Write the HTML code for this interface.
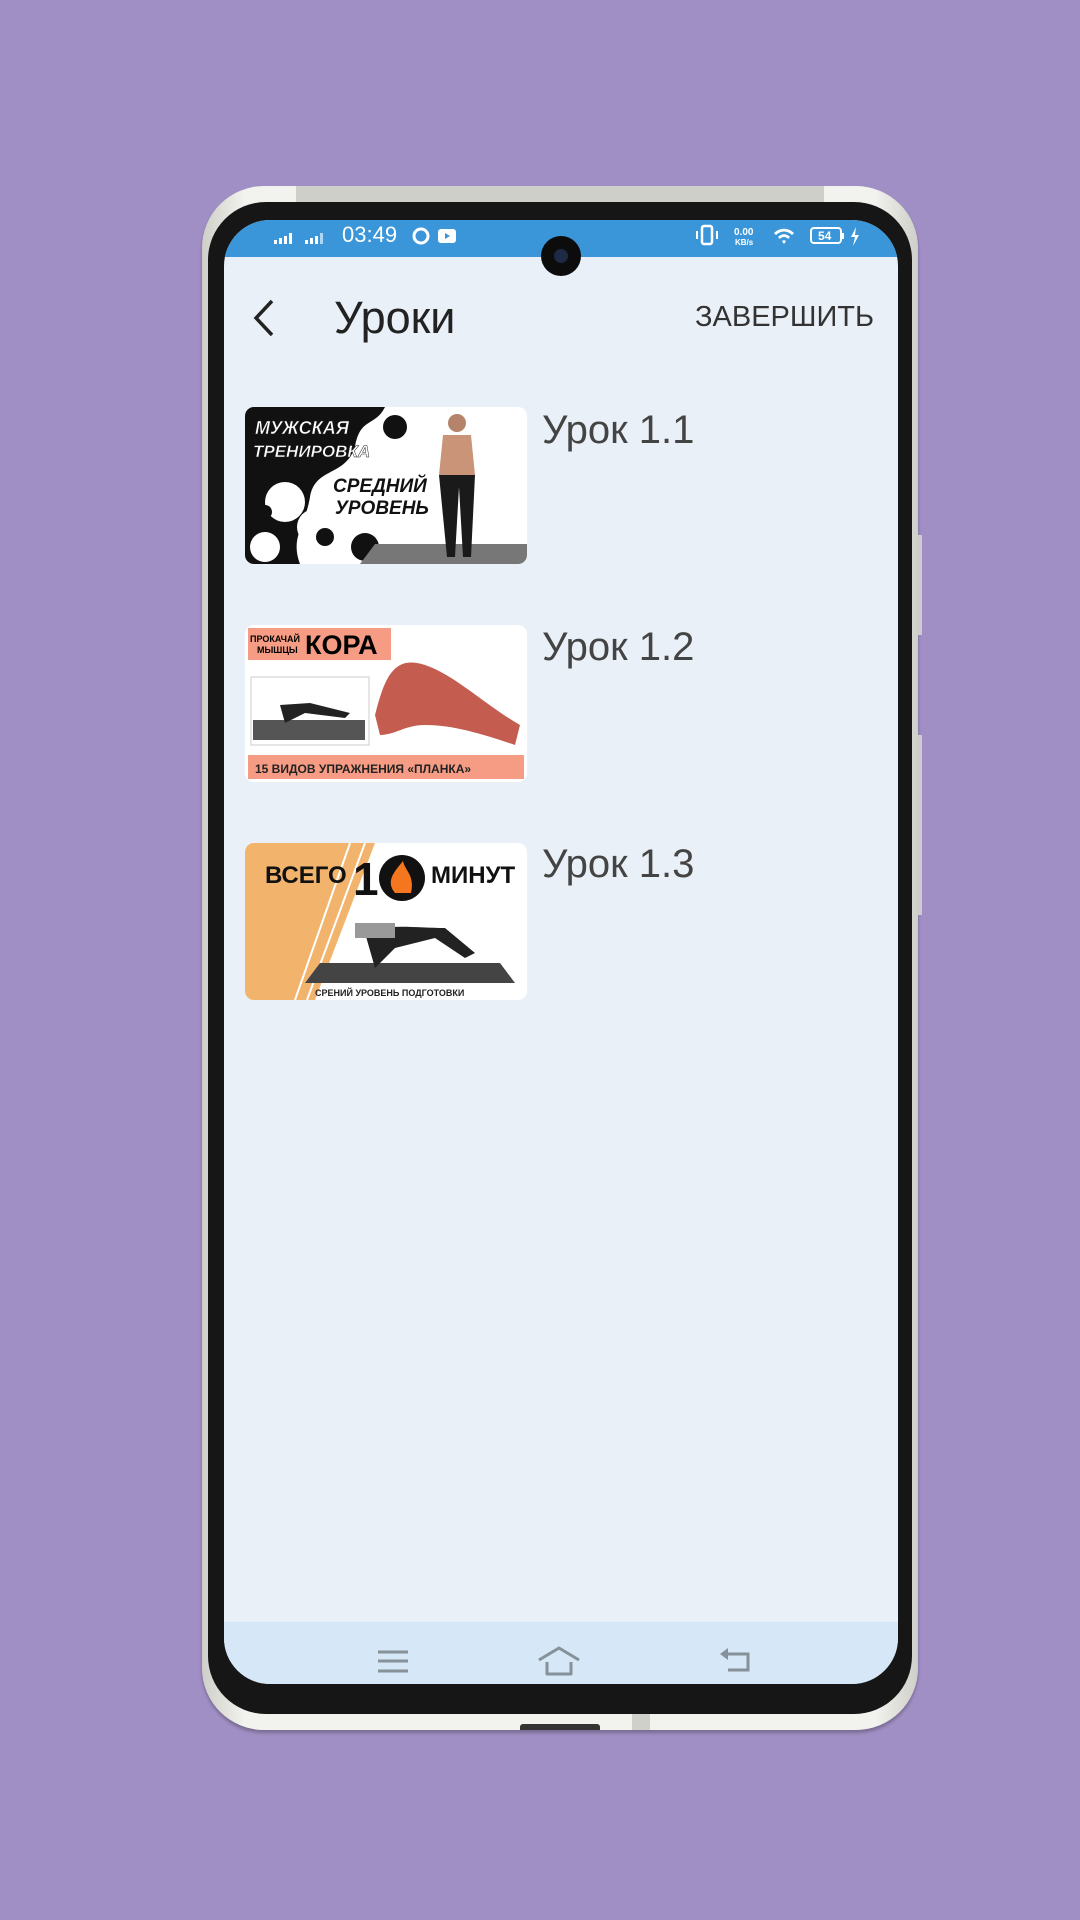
<!DOCTYPE html>
<html><head><meta charset="utf-8"><style>
*{margin:0;padding:0;box-sizing:border-box}
body{width:1080px;height:1920px;background:#a08fc4;position:relative;overflow:hidden;font-family:"Liberation Sans","DejaVu Sans",sans-serif}
.abs{position:absolute}
#outer{left:202px;top:186px;width:716px;height:1544px;border-radius:62px;background:linear-gradient(90deg,#cfcfc9,#f2f2ee 6%,#f2f2ee 94%,#cfcfc9);box-shadow:0 3px 3px rgba(0,0,0,.25)}
#bezel{left:208px;top:202px;width:704px;height:1512px;border-radius:58px;background:#161616}
#screen{left:224px;top:220px;width:674px;height:1464px;border-radius:46px;background:#e9f0f7;overflow:hidden}
#status{left:0;top:0;width:674px;height:37px;background:#3a96d9;color:#fff}
#nav{left:0;top:1402px;width:674px;height:62px;background:#d6e8f7}
.title{font-size:40px;color:#444}
.th{width:282px;height:157px;border-radius:9px;overflow:hidden;background:#fff}
</style></head><body>
<div id="outer" class="abs"></div>
<div class="abs" style="left:296px;top:186px;width:528px;height:16px;background:#cfcfc9"></div>
<div class="abs" style="left:375px;top:203px;width:370px;height:8px;border-radius:0 0 8px 8px;background:#555"></div>
<div id="bezel" class="abs"></div>
<div class="abs" style="left:918px;top:535px;width:4px;height:100px;background:#ccc"></div>
<div class="abs" style="left:918px;top:735px;width:4px;height:180px;background:#ccc"></div>
<div class="abs" style="left:520px;top:1724px;width:80px;height:6px;background:#333;border-radius:3px 3px 0 0"></div>
<div class="abs" style="left:632px;top:1714px;width:18px;height:16px;background:#d0d0cb"></div>
<div id="screen" class="abs">
 <div id="status" class="abs">
  <svg class="abs" style="left:50px;top:10px" width="60" height="16"><g fill="#fff"><rect x="0" y="10" width="3" height="4"/><rect x="5" y="8" width="3" height="6"/><rect x="10" y="6" width="3" height="8"/><rect x="15" y="3" width="3" height="11"/><rect x="31" y="10" width="3" height="4"/><rect x="36" y="8" width="3" height="6"/><rect x="41" y="6" width="3" height="8"/><rect x="46" y="3" width="3" height="11" opacity=".6"/></g></svg>
  <div class="abs" style="left:118px;top:2px;font-size:22px;color:#fff">03:49</div>
  <svg class="abs" style="left:188px;top:7px" width="48" height="20"><circle cx="9" cy="9" r="7" fill="none" stroke="#fff" stroke-width="3"/><rect x="26" y="2" width="18" height="14" rx="3" fill="#fff"/><path d="M33 6l5 3-5 3z" fill="#3a96d9"/></svg>
  <svg class="abs" style="left:470px;top:4px" width="180" height="28"><g fill="#fff"><rect x="8" y="2" width="10" height="18" rx="2" fill="none" stroke="#fff" stroke-width="2.5"/><rect x="2" y="7" width="2" height="8"/><rect x="22" y="7" width="2" height="8"/><text x="40" y="11" font-size="10" font-weight="bold" font-family="Liberation Sans">0.00</text><text x="41" y="21" font-size="8" font-weight="bold" font-family="Liberation Sans">KB/s</text><path d="M80 9a14 14 0 0 1 20 0l-2 2a11 11 0 0 0-16 0z M84 13a8 8 0 0 1 12 0l-2 2a5 5 0 0 0-8 0z M88 17a3 3 0 0 1 4 0l-2 3z"/><rect x="117" y="4" width="30" height="15" rx="3" fill="none" stroke="#fff" stroke-width="2"/><rect x="148" y="9" width="2" height="6"/><text x="124" y="16" font-size="12" font-weight="bold" font-family="Liberation Sans">54</text><path d="M162 3l-5 10h4l-2 9 6-11h-4z"/></g></svg>
 </div>
 <div class="abs" style="left:317px;top:16px;width:40px;height:40px;border-radius:50%;background:#0c0c0c"><div style="margin:13px;width:14px;height:14px;border-radius:50%;background:#1e2a44"></div></div>
 <svg class="abs" style="left:26px;top:78px" width="30" height="40"><path d="M22 3L6 20l16 17" fill="none" stroke="#222" stroke-width="3.5"/></svg>
 <div class="abs" style="left:110px;top:72px;font-size:45px;color:#222">Уроки</div>
 <div class="abs" style="left:471px;top:81px;font-size:29px;color:#333">ЗАВЕРШИТЬ</div>

 <div class="abs th" style="left:21px;top:187px">
  <svg width="282" height="157" viewBox="0 0 282 157">
   <path d="M0 0h140c-10 20-25 10-30 40-10 30-40 20-45 50-5 30-20 40-10 67H0z" fill="#111"/>
   <g fill="#fff"><circle cx="40" cy="95" r="20"/><circle cx="70" cy="120" r="18"/><circle cx="20" cy="140" r="15"/><circle cx="95" cy="80" r="12"/></g>
   <g fill="#111"><circle cx="150" cy="20" r="12"/><circle cx="80" cy="130" r="9"/><circle cx="120" cy="140" r="14"/><circle cx="20" cy="105" r="7"/></g>
   <path d="M115 157l15-20h152v20z" fill="#777"/>
   <text x="10" y="27" font-size="18" font-weight="bold" font-style="italic" fill="#fff" stroke="#222" stroke-width=".5" font-family="Liberation Sans">МУЖСКАЯ</text>
   <text x="8" y="50" font-size="17" font-weight="bold" font-style="italic" fill="#fff" stroke="#222" stroke-width=".5" font-family="Liberation Sans">ТРЕНИРОВКА</text>
   <text x="88" y="85" font-size="19" font-weight="bold" font-style="italic" fill="#111" font-family="Liberation Sans">СРЕДНИЙ</text>
   <text x="90" y="107" font-size="19" font-weight="bold" font-style="italic" fill="#111" font-family="Liberation Sans">УРОВЕНЬ</text>
   <circle cx="212" cy="16" r="9" fill="#b5836a"/>
   <path d="M198 28h28l4 40h-36z" fill="#c99478"/>
   <path d="M194 68h36l-4 82h-8l-4-70-4 70h-8z" fill="#1a1a1a"/>
  </svg>
 </div>
 <div class="abs title" style="left:318px;top:188px">Урок 1.1</div>

 <div class="abs th" style="left:21px;top:405px">
  <svg width="282" height="157" viewBox="0 0 282 157">
   <rect x="3" y="3" width="143" height="32" fill="#f79c84"/>
   <text x="5" y="17" font-size="9" font-weight="bold" font-family="Liberation Sans">ПРОКАЧАЙ</text>
   <text x="12" y="28" font-size="9" font-weight="bold" font-family="Liberation Sans">МЫШЦЫ</text>
   <text x="60" y="29" font-size="27" font-weight="bold" font-family="Liberation Sans">КОРА</text>
   <rect x="6" y="52" width="118" height="68" fill="#fff" stroke="#ccc"/>
   <path d="M8 95h112v20H8z" fill="#555"/>
   <path d="M35 80l30 -2 40 10-5 5-40-5-20 10z" fill="#222"/>
   <path d="M130 90c10-40 20-60 50-50 30 10 60 40 95 60l-5 20c-30-10-60-20-90-20-20 0-30 10-45 10z" fill="#c45c50"/>
   <rect x="3" y="130" width="276" height="24" fill="#f79c84"/>
   <text x="10" y="148" font-size="12" font-weight="bold" font-family="Liberation Sans" fill="#222">15 ВИДОВ УПРАЖНЕНИЯ «ПЛАНКА»</text>
  </svg>
 </div>
 <div class="abs title" style="left:318px;top:405px">Урок 1.2</div>

 <div class="abs th" style="left:21px;top:623px">
  <svg width="282" height="157" viewBox="0 0 282 157">
   <path d="M0 0h130L70 157H0z" fill="#f2b46c"/>
   <path d="M105 0L50 157M120 0L62 157" stroke="#fff" stroke-width="2"/>
   <text x="20" y="40" font-size="24" font-weight="bold" font-family="Liberation Sans" fill="#111">ВСЕГО</text>
   <text x="108" y="52" font-size="46" font-weight="bold" font-family="Liberation Sans" fill="#111">1</text>
   <circle cx="157" cy="35" r="23" fill="#111"/>
   <path d="M150 50c-10-12 0-22 8-32 2 10 12 14 8 32z" fill="#f4761e"/>
   <text x="186" y="40" font-size="24" font-weight="bold" font-family="Liberation Sans" fill="#111">МИНУТ</text>
   <path d="M60 140l15-20h180l15 20z" fill="#444"/>
   <path d="M120 90c20-10 50-5 80-5l30 25-10 5-30-20-40 10-20 20z" fill="#222"/>
   <path d="M110 80h40v15h-40z" fill="#999"/>
   <text x="70" y="153" font-size="9" font-weight="bold" font-family="Liberation Sans" fill="#222">СРЕНИЙ УРОВЕНЬ ПОДГОТОВКИ</text>
  </svg>
 </div>
 <div class="abs title" style="left:318px;top:622px">Урок 1.3</div>

 <div id="nav" class="abs">
  <svg class="abs" style="left:150px;top:26px" width="40" height="30"><path d="M4 4h30M4 13h30M4 23h30" stroke="#87919a" stroke-width="3"/></svg>
  <svg class="abs" style="left:312px;top:22px" width="50" height="36"><path d="M3 16L23 4l20 12M11 18v12h24V18" fill="none" stroke="#87919a" stroke-width="3" stroke-linejoin="round"/></svg>
  <svg class="abs" style="left:494px;top:24px" width="40" height="34"><path d="M8 8h22v16H10" fill="none" stroke="#87919a" stroke-width="3"/><path d="M2 8l8-6v12z" fill="#87919a"/></svg>
 </div>
</div>
</body></html>
